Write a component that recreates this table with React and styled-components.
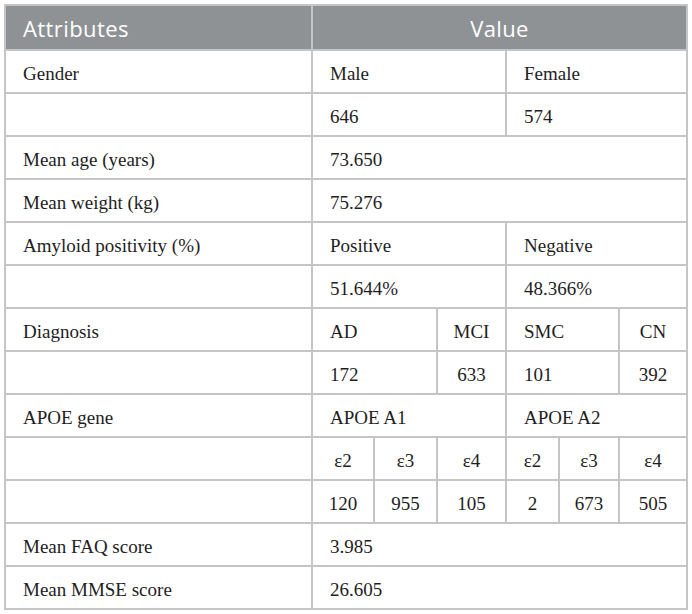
import React from 'react'
import styled, { createGlobalStyle } from 'styled-components'

const GlobalStyle = createGlobalStyle`
  body {
    margin: 0;
    background: #ffffff;
  }
`

const Page = styled.div`
  padding: 4px;
`

const Table = styled.table`
  border-collapse: collapse;
  table-layout: fixed;
  width: 682px;
  border: 2px solid #c3c5c6;
  font-family: "Liberation Serif", "Times New Roman", serif;
  color: #1e1e1e;
`

const HeadCell = styled.th`
  background: #8e9294;
  color: #ffffff;
  font-family: "Open Sans", "Noto Sans", sans-serif;
  font-weight: 400;
  font-size: 22px;
  letter-spacing: 0.4px;
  height: 45px;
  box-sizing: border-box;
  padding: ${({ $center }) => ($center ? '0' : '0 0 0 17px')};
  text-align: ${({ $center }) => ($center ? 'center' : 'left')};
  border: 2px solid #c3c5c6;
  border-top: none;
`

const Cell = styled.td`
  height: 43px;
  box-sizing: border-box;
  padding: ${({ $narrow }) => ($narrow ? '4px 0 0 0' : '4px 0 0 17px')};
  text-align: ${({ $narrow }) => ($narrow ? 'center' : 'left')};
  font-size: 19px;
  border: 2px solid #c3c5c6;
  white-space: nowrap;
`

const cols = [307, 62, 63, 69, 53, 60, 68]

const rows = [
  ['Gender', ['Male', 3], ['Female', 3]],
  ['', ['646', 3], ['574', 3]],
  ['Mean age (years)', ['73.650', 6]],
  ['Mean weight (kg)', ['75.276', 6]],
  ['Amyloid positivity (%)', ['Positive', 3], ['Negative', 3]],
  ['', ['51.644%', 3], ['48.366%', 3]],
  ['Diagnosis', ['AD', 2], ['MCI', 1], ['SMC', 2], ['CN', 1]],
  ['', ['172', 2], ['633', 1], ['101', 2], ['392', 1]],
  ['APOE gene', ['APOE A1', 3], ['APOE A2', 3]],
  ['', ['ε2', 1], ['ε3', 1], ['ε4', 1], ['ε2', 1], ['ε3', 1], ['ε4', 1]],
  ['', ['120', 1], ['955', 1], ['105', 1], ['2', 1], ['673', 1], ['505', 1]],
  ['Mean FAQ score', ['3.985', 6]],
  ['Mean MMSE score', ['26.605', 6]],
]

export default function App() {
  return (
    <Page>
      <GlobalStyle />
      <Table>
        <colgroup>
          {cols.map((w, i) => (
            <col key={i} style={{ width: w }} />
          ))}
        </colgroup>
        <thead>
          <tr>
            <HeadCell>Attributes</HeadCell>
            <HeadCell colSpan={6} $center>Value</HeadCell>
          </tr>
        </thead>
        <tbody>
          {rows.map(([label, ...vals], r) => (
            <tr key={r}>
              <Cell>{label}</Cell>
              {vals.map(([v, span], i) => (
                <Cell key={i} colSpan={span} $narrow={span === 1}>
                  {v}
                </Cell>
              ))}
            </tr>
          ))}
        </tbody>
      </Table>
    </Page>
  )
}
